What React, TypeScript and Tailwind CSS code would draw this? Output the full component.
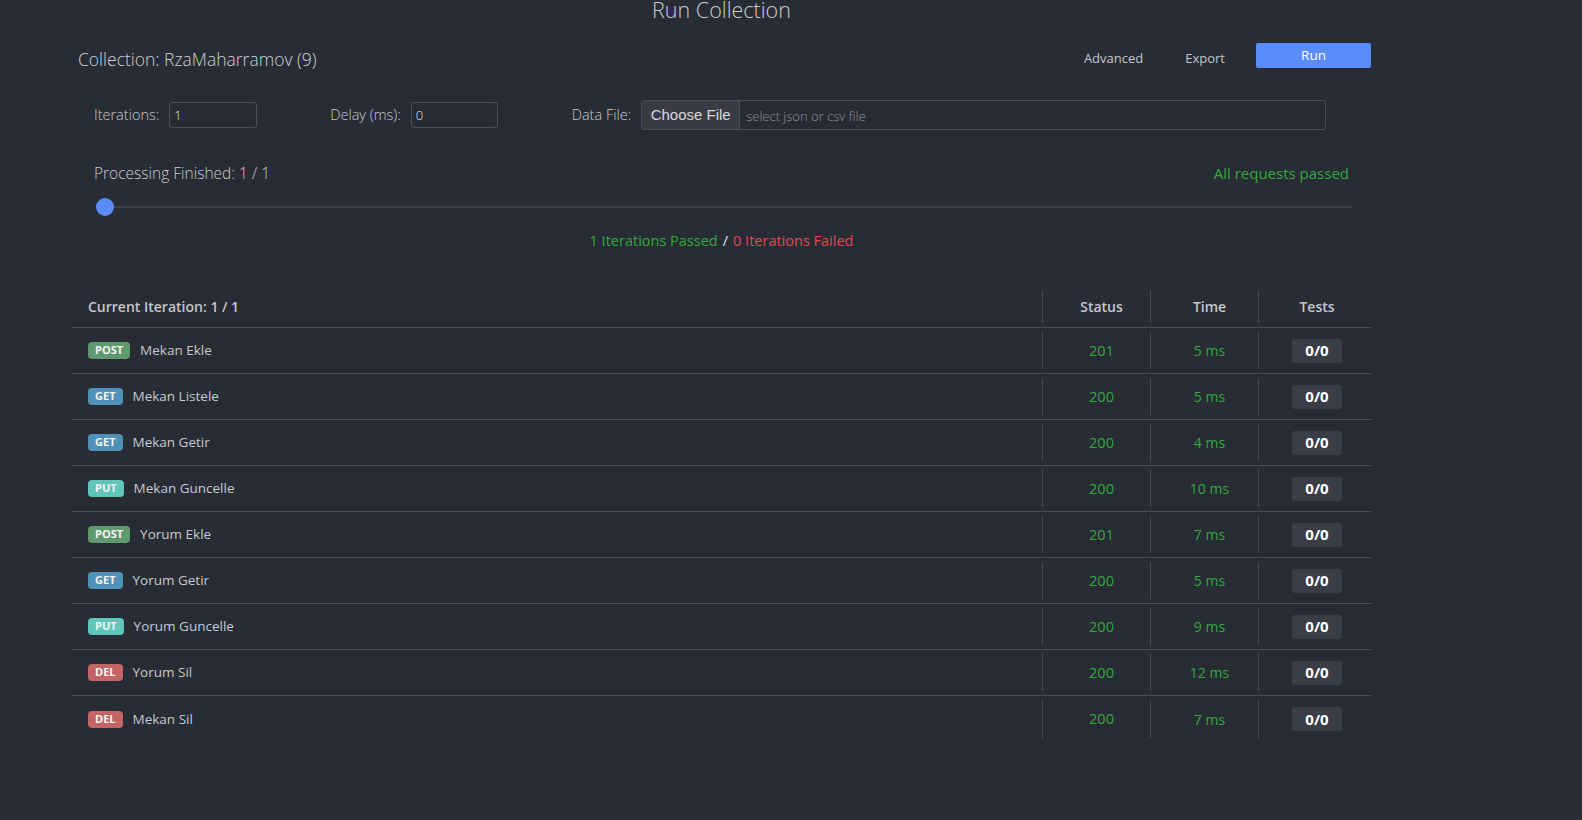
import React from 'react';

type Method = 'POST' | 'GET' | 'PUT' | 'DEL';

type RequestRow = {
  method: Method;
  name: string;
  status: number;
  time: string;
};

const rows: RequestRow[] = [
  { method: 'POST', name: 'Mekan Ekle', status: 201, time: '5 ms' },
  { method: 'GET', name: 'Mekan Listele', status: 200, time: '5 ms' },
  { method: 'GET', name: 'Mekan Getir', status: 200, time: '4 ms' },
  { method: 'PUT', name: 'Mekan Guncelle', status: 200, time: '10 ms' },
  { method: 'POST', name: 'Yorum Ekle', status: 201, time: '7 ms' },
  { method: 'GET', name: 'Yorum Getir', status: 200, time: '5 ms' },
  { method: 'PUT', name: 'Yorum Guncelle', status: 200, time: '9 ms' },
  { method: 'DEL', name: 'Yorum Sil', status: 200, time: '12 ms' },
  { method: 'DEL', name: 'Mekan Sil', status: 200, time: '7 ms' },
];

const badgeColor: Record<Method, string> = {
  POST: 'bg-[#5f9a6e]',
  GET: 'bg-[#5291b7]',
  PUT: 'bg-[#5fc6b8]',
  DEL: 'bg-[#c56464]',
};

// cell with the short vertical divider on its left
const Cell: React.FC<{ children: React.ReactNode; last?: boolean }> = ({ children, last }) => (
  <div className="flex h-full pt-[4px] pb-[4px]">
    <div
      className={
        'flex flex-1 items-center justify-center border-l border-[#464a52] ' + (last ? 'pl-[4px]' : 'pl-[10px]')
      }
    >
      {children}
    </div>
  </div>
);

const App: React.FC = () => {
  return (
    <div className="min-h-screen w-full overflow-hidden bg-[#282c34] font-['Open_Sans',_'Noto_Sans',_sans-serif] text-[#c6c9ce]">
      <div className="ml-[72px] w-[1299px]">
        {/* Title */}
        <div className="flex h-[20px] items-center justify-center">
          <h1 className="text-[21.5px] font-light leading-none text-[#c9ccd1]">Run Collection</h1>
        </div>

        {/* Collection header */}
        <div className="flex h-[78px] items-center justify-between">
          <div className="pl-[6px] text-[17.5px] font-light text-[#cdd0d4]">Collection: RzaMaharramov (9)</div>
          <div className="flex items-center">
            <button className="mr-[42px] text-[13px] text-[#c3c6cb]">Advanced</button>
            <button className="mr-[31px] text-[13px] text-[#c3c6cb]">Export</button>
            <button className="mb-[7px] h-[25px] w-[115px] rounded-[2px] bg-[#5a8dfa] text-[13.5px] text-white">
              Run
            </button>
          </div>
        </div>

        {/* Run options */}
        <div className="flex h-[34px] items-center pl-[22px] text-[14.5px] font-light">
          <span>Iterations:</span>
          <input
            readOnly
            value="1"
            className="ml-[10px] h-[26px] w-[88px] rounded-[3px] border border-[#4a4e56] bg-transparent px-[4px] text-[13px] text-[#e4e6e9] outline-none"
          />
          <span className="ml-[73px]">Delay (ms):</span>
          <input
            readOnly
            value="0"
            className="ml-[10px] h-[26px] w-[87px] rounded-[3px] border border-[#4a4e56] bg-transparent px-[4px] text-[13px] text-[#e4e6e9] outline-none"
          />
          <span className="ml-[74px]">Data File:</span>
          <div className="ml-[10px] flex h-[30px] w-[685px] items-stretch overflow-hidden rounded-[3px] border border-[#4a4d55]">
            <div className="flex w-[98px] items-center justify-center border-r border-[#4a4d55] bg-[#393c43] font-['Liberation_Sans',_sans-serif] text-[15px] text-[#d6d8dc]">
              Choose File
            </div>
            <div className="flex items-center pl-[6px] pt-[3px] text-[13px] text-[#8d9198]">select json or csv file</div>
          </div>
        </div>

        {/* Progress */}
        <div className="mt-[24px] flex h-[35px] items-center justify-between pl-[22px] pr-[22px] text-[15.5px] font-light">
          <span className="text-[#c8cbd0]">Processing Finished: 1 / 1</span>
          <span className="text-[15px] font-normal text-[#31a93d]">All requests passed</span>
        </div>
        <div className="flex h-[32px] items-center pl-[24px] pr-[19px]">
          <div className="relative h-[2px] flex-1 bg-[#3b3f48]">
            <div className="absolute left-0 top-[-8px] h-[18px] w-[18px] rounded-full bg-[#5a8dfa]" />
          </div>
        </div>
        <div className="flex h-[35px] items-center justify-center text-[14.5px]">
          <span className="text-[#31a93d]">1 Iterations Passed</span>
          <span className="mx-[5px] text-[#e6e8ea]">/</span>
          <span className="text-[#e2474f]">0 Iterations Failed</span>
        </div>

        {/* Results table */}
        <div className="mt-[28px]">
          <div className="grid h-[42px] grid-cols-[970px_108px_108px_113px] border-b border-[#4a4d55] text-[14px] font-semibold text-[#c3c7cd]">
            <div className="flex items-center pl-[16px]">Current Iteration: 1 / 1</div>
            <Cell>Status</Cell>
            <Cell>Time</Cell>
            <Cell last>Tests</Cell>
          </div>
          {rows.map((r, i) => (
            <div
              key={r.name}
              className={
                'grid h-[46px] grid-cols-[970px_108px_108px_113px] ' +
                (i < rows.length - 1 ? 'border-b border-[#4a4d55]' : '')
              }
            >
              <div className="flex items-center pl-[16px]">
                <span
                  className={
                    'flex h-[17px] items-center rounded-[4px] px-[7px] text-[11px] font-bold text-[#f2f4f5] ' +
                    badgeColor[r.method]
                  }
                >
                  {r.method}
                </span>
                <span className="ml-[10px] text-[13.5px] text-[#c6c9ce]">{r.name}</span>
              </div>
              <Cell>
                <span className="text-[14.5px] text-[#31a93d]">{r.status}</span>
              </Cell>
              <Cell>
                <span className="text-[14px] text-[#31a93d]">{r.time}</span>
              </Cell>
              <Cell last>
                <span className="flex h-[24px] w-[50px] items-center justify-center rounded-[3px] bg-[#3a3d45] text-[15px] font-bold text-white">
                  0/0
                </span>
              </Cell>
            </div>
          ))}
        </div>
      </div>
    </div>
  );
};

export default App;
